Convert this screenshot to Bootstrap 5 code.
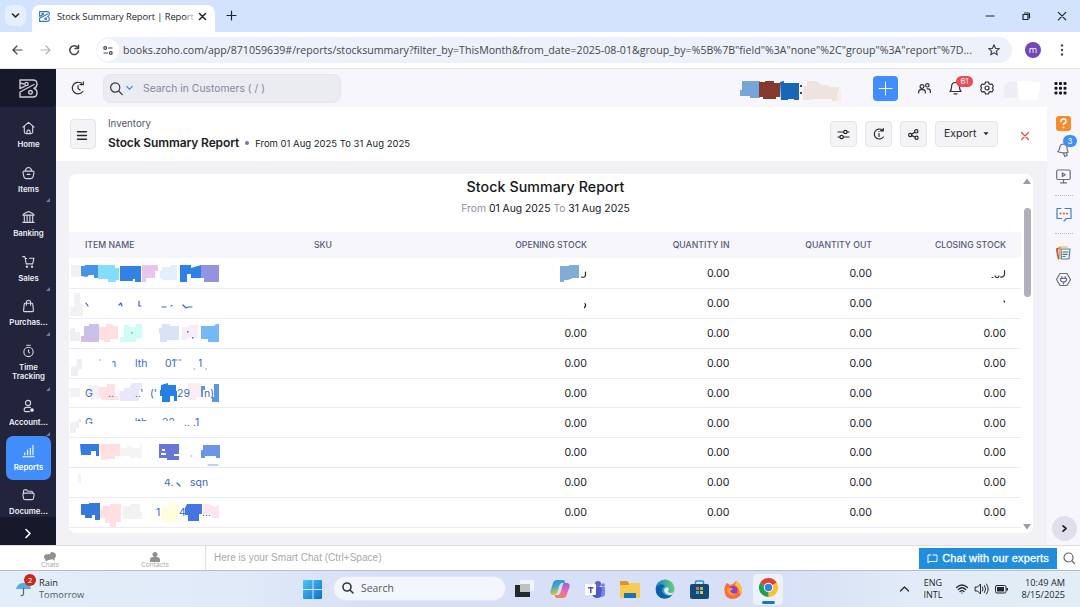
<!DOCTYPE html>
<html lang="en">
<head>
<meta charset="utf-8">
<title>Stock Summary Report | Reports</title>
<link href="https://cdn.jsdelivr.net/npm/bootstrap@5.3.0/dist/css/bootstrap.min.css" rel="stylesheet">
<style>
body{width:1080px;height:607px;overflow:hidden;font-family:Inter,"Liberation Sans",sans-serif;font-size:11px;line-height:1.2;color:#212529;background:#fff}
svg{display:block;flex:none;overflow:visible}
.ln{fill:none;stroke:currentColor;stroke-width:1.2;stroke-linecap:round;stroke-linejoin:round}
.win{font-family:"Open Sans","Noto Sans",sans-serif}
.nw{white-space:nowrap}
.tabstrip{height:32px;background:#d3e3fd;padding:5px 14px 0 5px}
.tabmenu{width:21px;height:21px;border-radius:7px;background:#e6effe}
.tab-active{width:183px;height:27px;margin-left:6px;background:#fff;border-radius:8px 8px 0 0;padding:0 9px 4px 7px}
.tab-name{font-size:9.4px;letter-spacing:-.1px;color:#1f1f1f}
.toolbar{height:37px;padding:0 12px 0 11px;border-bottom:1px solid #e3e5e8;color:#45484c}
.omni{width:916px;height:26px;border-radius:13px;background:#edf1fa;margin-left:16px;padding:0 12px 0 1px}
.site{width:22px;height:22px;border-radius:50%;background:#fff}
.url{font-size:10.6px;letter-spacing:.01px;color:#44474c;margin-left:4px}
.avatar{width:16px;height:16px;border-radius:50%;background:#7248b9;color:#fff;font-size:9px}
.app{height:476px}
.side{width:56px;background:#21243b;color:#dfe1ec;flex:none}
.brand{height:38px;background:#171829;border-radius:0 0 5px 0;color:#c9cad3}
.side-list{height:410px;padding-top:6px;padding-left:1px}
.side-item{height:44.6px;padding-top:8px;font-size:7.8px;font-weight:600;line-height:9.5px;flex:none;position:relative;text-align:center;color:#f0f1f7}
.side-item svg{margin-bottom:5px;color:#d4d6e3;width:13px}
.side-item.tall{height:55px}
.side-item.sub::after{content:"";position:absolute;right:6px;bottom:0;border-left:4px solid transparent;border-bottom:4px solid #777b91}
.side-item.now{background:#408dfb;border-radius:7px;width:45px;margin:0 auto;color:#fff;height:44px}
.side-item.now svg{color:#fff}
.side-more{height:28px;background:#171829;color:#fff}
.topbar{height:38px;background:#f7f7fb;padding:0 11px 0 15px;color:#2d2f3d}
.find{width:238px;height:29px;border-radius:7px;background:#ebebf2;margin-left:18px;padding-left:6px;border:1px solid #e6e6ee;color:#33353f}
.find span{font-size:10.3px;color:#86889a;margin-left:10px;letter-spacing:.03px;padding-top:1px}
.plus{width:25px;height:25px;border-radius:4px;background:#408dfb;color:#fff}
.pill{position:absolute;left:7px;top:-5px;height:11px;width:17px;border-radius:6px;background:#ec4a54;color:#fff;font-size:8px;line-height:11px;text-align:center}
.head{height:54px;padding:0 17px 0 14px}
.sq{height:26px;width:27px;border-radius:4px;background:#f4f4f6;border:1px solid #e4e4e9;color:#26272e}
.menu-sq{height:30px;width:26px}
.head h1{font-size:12px;font-weight:600;margin:0;color:#1c1d24;letter-spacing:-.12px}
.body-bg{background:#f1f1f6;padding:13px 14px 12px 13px;height:384px}
.sheet{height:359px;background:#fff;border-radius:7px;overflow:hidden}
.sheet h2{font-size:14.2px;font-weight:500;line-height:18px;margin:3px 0 0;color:#15161b;letter-spacing:.08px}
.period{font-size:10.35px;margin-top:6px;color:#8e90a3}
.period b{font-weight:400;color:#15161b}
.g{display:grid;grid-template-columns:245px 149px 124px 142.5px 142.5px 134px;align-items:center}
.g>*{text-align:right}
.g>.l{text-align:left}
.th{height:26px;background:#f7f7fb;color:#55567a;font-size:8.7px;font-weight:500;width:952px;margin-bottom:1px}
.tr-row{height:29.9px;border-bottom:1px solid #ebebf3;font-size:10.6px;color:#202127;width:952px}
.tr-row>span{padding-top:2px}
.tr-row>svg{margin-left:1px}
.tr-row text{font-size:10.5px;fill:#3c69b5}
.scroller{width:12px;padding:4px 0}
.thumb{width:7px;height:89px;border-radius:4px;background:#b0b0ba;margin-top:23px}
.rail{width:33px;background:#f7f7fb;color:#6a6b88;padding-top:9px;flex:none;position:relative}
.rail hr{width:18px;margin:0;border-top:1px dotted #b9bac9;opacity:1}
.cnt{position:absolute;left:6px;top:-7px;width:14px;height:12px;border-radius:6px;background:#408dfb;color:#fff;font-size:8px;line-height:12px;text-align:center}
.chatbar{height:25px;border-top:1px solid #dedee2;background:#fff;color:#999}
.mini{font-size:6.6px;color:#aaa;line-height:7px}
.smart{border-left:1px solid #ddd;height:24px;padding-left:8px;font-size:10px;color:#a9a9a9;font-family:"Liberation Sans",sans-serif;letter-spacing:.03px}
.experts{width:138px;height:21px;background:#218ddd;color:#fff;font-family:"Liberation Sans",sans-serif;font-size:11px;letter-spacing:.13px;-webkit-text-stroke:.3px #fff}
.task{height:37px;border-top:1px solid #b6bfd0;background:linear-gradient(90deg,#e3eef9,#e0e9f8 23%,#d7e0f6 35%,#d7e0f6 72%,#e2ebf7 85%,#e2edf6);color:#24262b;font-size:9.3px;line-height:12px}
.search-win{width:173px;height:25px;border-radius:13px;background:#f3f6fd;border:1px solid #e1e7f5;padding-left:8px;font-size:10.4px;color:#555963}
.dot2{position:absolute;left:8px;top:-7px;width:12px;height:12px;border-radius:50%;background:#c42b1c;color:#fff;font-size:8px;text-align:center;line-height:12px}
</style>
<script src="https://cdn.jsdelivr.net/npm/bootstrap@5.3.0/dist/js/bootstrap.bundle.min.js"></script>
</head>
<body>
<!-- browser tabs -->
<div class="tabstrip d-flex win">
  <div class="tabmenu d-flex align-items-center justify-content-center"><svg width="7" height="5" class="ln" style="stroke-width:1.6"><path d="M.5 1 3.5 4 6.5 1"/></svg></div>
  <div class="tab-active d-flex align-items-center">
    <svg width="11" height="11" viewBox="0 0 18 18" class="ln" style="color:#347ab8;stroke-width:1.8"><path d="M1 1h12q4 0 4 4 0 3-3 4 3 1 3 4 0 4-4 4H1v-5L14 5M1 1v8l4-2"/><circle cx="6" cy="5" r="1.3"/><circle cx="11" cy="12.500" r="1.5"/></svg>
    <span class="tab-name nw" style="margin-left:7px">Stock Summary Report | Repo<span style="color:#888">r</span><span style="color:#bbb">t</span></span>
    <svg width="7" height="7" class="ln ms-auto" style="stroke-width:1.5"><path d="M.5.5l6 6M6.500.5l-6 6"/></svg>
  </div>
  <svg width="9" height="9" class="ln ms-3 mt-1" style="transform:translate(-4px,2px)"><path d="M4.500 0v9M0 4.500h9"/></svg>
  <div class="d-flex ms-auto align-items-center gap-4 pe-0" style="height:22px">
    <svg width="8" height="8" class="ln me-1"><path d="M0 4h8"/></svg>
    <svg width="8" height="8" class="ln me-1"><path d="M1 2.500h5v5H1zM2.500 1h4q1 0 1 1v4"/></svg>
    <svg width="8" height="8" class="ln"><path d="M.3.3l7.500 7.500M7.800.3.3 7.800"/></svg>
  </div>
</div>
<div class="toolbar d-flex align-items-center win">
  <svg width="12" height="12" class="ln"><path d="M11 6H2M6 2 2 6l4 4"/></svg>
  <svg width="12" height="12" class="ln" style="color:#b1b3b6;margin-left:17px"><path d="M1 6h9M6 2l4 4-4 4"/></svg>
  <svg width="12" height="12" class="ln" style="margin-left:16px;stroke-width:1.5"><path d="M10 4A4.400 4.400 0 1 0 10.500 7M10.500 1.200V4.500H7"/></svg>
  <div class="omni d-flex align-items-center">
    <div class="site d-flex align-items-center justify-content-center"><svg width="10" height="9" class="ln"><circle cx="2.200" cy="2" r="1.400"/><path d="M5.500 2H9M1 7h3.500"/><circle cx="7.800" cy="7" r="1.400"/></svg></div>
    <span class="url nw">books.zoho.com/app/871059639#/reports/stocksummary?filter_by=ThisMonth&amp;from_date=2025-08-01&amp;group_by=%5B%7B"field"%3A"none"%2C"group"%3A"report"%7D...</span>
    <svg width="12" height="12" class="ln ms-auto"><path d="M6 .8 7.500 4.300 11.300 4.600 8.400 7.100 9.300 10.800 6 8.800 2.700 10.800 3.600 7.100.7 4.600 4.500 4.300z"/></svg>
  </div>
  <div class="avatar d-flex align-items-center justify-content-center" style="margin-left:13px">m</div>
  <svg width="4" height="12" style="margin-left:19px" fill="#45484c"><circle cx="2" cy="1.500" r="1.200"/><circle cx="2" cy="6" r="1.200"/><circle cx="2" cy="10.500" r="1.200"/></svg>
</div>

<div class="app d-flex">
  <!-- module navigation -->
  <nav class="side d-flex flex-column">
    <div class="brand d-flex align-items-center justify-content-center"><svg width="19" height="19" viewBox="0 0 19 19" class="ln" style="stroke-width:1.400"><path d="M1 1h13q4 0 4 4 0 3-3 4.500 3 .5 3 4.500 0 4-4 4H1v-5L15 5.500M1 1v8.500l5-2.300M1 4l4 1"/><circle cx="7.500" cy="5" r="1.600"/><circle cx="11.500" cy="13.300" r="1.800"/></svg></div>
    <div class="side-list d-flex flex-column">
      <div class="side-item d-flex flex-column align-items-center"><svg width="14" height="14" viewBox="0 0 14 14" class="ln"><path d="M1 6 7 1l6 5M2.500 5v6q0 2 2 2h5q2 0 2-2V5M5.300 13v-2q0-1.700 1.700-1.700T8.700 11v2"/></svg>Home</div>
      <div class="side-item sub d-flex flex-column align-items-center"><svg width="14" height="14" viewBox="0 0 14 14" class="ln"><path d="M2.500 5h9q1.500 0 1.400 1.500L12 11q-.4 2-2.500 2h-5Q2.400 13 2 11L1.100 6.500Q1 5 2.500 5zM3.500 4.500C4.500 0 9.500 0 10.500 4.500M5.500 8.500h3"/></svg>Items</div>
      <div class="side-item d-flex flex-column align-items-center"><svg width="14" height="14" viewBox="0 0 14 14" class="ln"><path d="M1 5q0-1 2-2l4-2 4 2q2 1 2 2zM2.500 5v7M5.500 5v7M8.500 5v7M11.500 5v7M1 12.800h12"/></svg>Banking</div>
      <div class="side-item sub d-flex flex-column align-items-center"><svg width="14" height="14" viewBox="0 0 14 14" class="ln"><path d="M.8 1.200h1.500q.8 0 1 .8L4.500 9h7l1.300-6H8M3.600 3.300h1.500"/><circle cx="5.300" cy="12" r=".7"/><circle cx="10.800" cy="12" r=".7"/></svg>Sales</div>
      <div class="side-item sub d-flex flex-column align-items-center"><svg width="14" height="14" viewBox="0 0 14 14" class="ln"><path d="M3.500 4h7q1 0 1.100 1l.7 7q0 1-1 1H2.700q-1 0-1-1l.7-7q.1-1 1.100-1zM4.700 6.200V3.500q0-2.700 2.300-2.700t2.300 2.700v2.700"/></svg>Purchas...</div>
      <div class="side-item sub tall d-flex flex-column align-items-center"><svg width="14" height="14" viewBox="0 0 14 14" class="ln"><circle cx="7" cy="8" r="5"/><path d="M5 .8h4M7 5.800V8l1.200 1"/></svg><span>Time<br>Tracking</span></div>
      <div class="side-item sub d-flex flex-column align-items-center"><svg width="14" height="14" viewBox="0 0 14 14" class="ln"><circle cx="6.500" cy="3.800" r="2.800"/><path d="M9 8.500H5Q2.300 8.500 2.300 11T4.500 13H8"/><circle cx="10.800" cy="11.300" r="1.400" fill="#fff"/></svg>Account...</div>
      <div class="side-item now d-flex flex-column align-items-center"><svg width="14" height="14" viewBox="0 0 14 14" class="ln"><path d="M1 13.200h12M3 11V9M6 11V6M9 11V4M11.800 11V1"/></svg>Reports</div>
      <div class="side-item d-flex flex-column align-items-center"><svg width="14" height="14" viewBox="0 0 14 14" class="ln"><path d="M1.500 5V3q0-1.500 1.500-1.500h2L6.500 3H10q1.500 0 1.500 1.700M2.500 5h9q1.700 0 1.500 1.500l-.6 4q-.2 1.500-2 1.500H3.600q-1.800 0-2-1.500L1 6.500Q.9 5 2.500 5z"/></svg>Docume...</div>
    </div>
    <div class="side-more d-flex align-items-center justify-content-center pt-1"><svg width="6" height="9" class="ln" style="stroke-width:1.6"><path d="M1 .5 5 4.500 1 8.500"/></svg></div>
  </nav>

  <div class="flex-grow-1">
    <div class="topbar d-flex align-items-center">
      <svg width="14" height="14" viewBox="0 0 14 14" class="ln"><path d="M11.800 10.500A5.800 5.800 0 1 1 10.500 2.300M9 3.700h3.300V.8M7 4.500V7.500l2 1.500"/></svg>
      <div class="find d-flex align-items-center">
        <svg width="13" height="13" class="ln"><circle cx="5.200" cy="5.500" r="4.600"/><path d="M8.700 9l3.600 3.600"/></svg>
        <svg width="7" height="4" class="ln" style="color:#408dfb;margin-left:3px"><path d="M.8.5 3.500 3.300 6.200.5"/></svg>
        <span>Search in Customers ( / )</span>
      </div>
      <svg width="110" height="26" style="margin-left:399px;margin-top:3px">
        <path fill="#77a5d8" d="M2 4h18v17H10v-2H0v-6h2z"/><path fill="#84392e" d="M19 5h6V4h9v2h6v14h-4v2H23v-2h-4z"/><path fill="#1866b8" d="M40 5l4-1v2h15v17h-5v-1h-6v1h-7z"/><path fill="#33415c" d="M60 8h2v2h-2zM60 15h2v2h-2z"/><path fill="#ede4e0" d="M63 9h4V4h9l6 4h7v2h10v7h2v7h-9v-2H72l-1 1h-8z"/><path fill="#f3efee" d="M97 14h4v10h-4z"/>
      </svg>
      <div class="d-flex align-items-center" style="margin-left:23px">
        <div class="plus d-flex align-items-center justify-content-center"><svg width="13" height="13" class="ln" style="stroke-width:1"><path d="M6.500 0v13M0 6.500h13"/></svg></div>
        <svg width="13" height="12" viewBox="0 0 13 12" class="ln" style="margin-left:20px"><circle cx="4" cy="4.500" r="1.900"/><circle cx="9.300" cy="3.300" r="1.700"/><path d="M.7 11V10q0-2.300 2.300-2.300h2q2.300 0 2.300 2.300v1M9 6.800h1.200q2.100 0 2.100 2.200v1.500"/></svg>
        <div class="position-relative" style="margin-left:18px"><svg width="13" height="14" viewBox="0 0 13 14" class="ln"><path d="M1 10.500q1.500-1.500 1.500-4.500 0-4.500 4-4.500t4 4.500q0 3 1.500 4.500zM5 12.800h3"/></svg><span class="pill">61</span></div>
        <svg width="14" height="14" viewBox="0 0 14 14" class="ln" style="margin-left:18px"><path d="M5.500 1h3l.5 1.700 1.200.7 1.800-.4 1.400 2.500L12.200 7l1.200 1.500L12 11l-1.800-.4-1.200.7-.5 1.700h-3L5 11.300l-1.200-.7L2 11 .6 8.500 1.800 7 .6 5.500 2 3l1.800.4L5 2.700z"/><circle cx="7" cy="7" r="2"/></svg>
        <svg width="38" height="24" style="margin-left:10px;margin-top:4px"><path fill="#eeeef2" d="M0 7l5-3h8v16H0z"/><path fill="#fff" d="M13 3h8l15 1v5l-3 13H16z"/></svg>
        <svg width="13" height="13" style="margin-left:12px" fill="#15161b"><g id="gd"><rect y="0" x=".5" width="3" height="3" rx="1"/><rect y="0" x="5" width="3" height="3" rx="1"/><rect y="0" x="9.500" width="3" height="3" rx="1"/></g><use href="#gd" y="4.700"/><use href="#gd" y="9.400"/></svg>
      </div>
    </div>
    <div class="d-flex">
      <main class="flex-grow-1" style="width:991px">
        <div class="head d-flex align-items-center">
          <div class="sq menu-sq d-flex align-items-center justify-content-center"><svg width="10" height="9" class="ln" style="stroke-width:1.400;margin-left:-2px;margin-top:2px"><path d="M.5.8h9M.5 4.500h9M.5 8.200h9"/></svg></div>
          <div style="margin-left:12px">
            <div style="font-size:9.7px;color:#55576a;padding-top:1px">Inventory</div>
            <div class="d-flex align-items-center" style="margin-top:6px"><h1 class="nw">Stock Summary Report</h1><span class="rounded-circle" style="width:4px;height:4px;background:#777a91;margin:0 6px"></span><span class="nw" style="font-size:9.500px">From 01 Aug 2025 To 31 Aug 2025</span></div>
          </div>
          <div class="d-flex ms-auto align-items-center" style="gap:8px">
            <div class="sq d-flex align-items-center justify-content-center"><svg width="11" height="9" class="ln"><path d="M0 2h5.500M9.300 2H11M0 7h1.700M5.500 7H11"/><circle cx="7.400" cy="2" r="1.700"/><circle cx="3.600" cy="7" r="1.700"/></svg></div>
            <div class="sq d-flex align-items-center justify-content-center"><svg width="12" height="12" viewBox="0 0 12 12" class="ln"><path d="M10.300 9A5 5 0 1 1 9.300 2M7.500 2.800h2.800V.5M6 5.500v3M6 3.500v.1"/></svg></div>
            <div class="sq d-flex align-items-center justify-content-center"><svg width="11" height="11" class="ln"><circle cx="2.200" cy="6" r="1.600"/><circle cx="8.300" cy="2.300" r="1.700"/><circle cx="8.500" cy="8.700" r="1.600"/><path d="M3.700 5.200 6.800 3.200M3.800 6.600 7 8"/></svg></div>
            <div class="sq d-flex align-items-center justify-content-between" style="width:63px;padding:0 8px;font-size:10.500px">Export<svg width="6" height="4" fill="#202127"><path d="M.5.300h5L3 3.300z"/></svg></div>
            <svg width="8" height="8" class="ln" style="color:#e54643;margin-left:15px;margin-right:1px;margin-top:3px"><path d="M.5.500l7 7M7.500.500l-7 7"/></svg>
          </div>
        </div>
        <div class="body-bg">
          <div class="sheet d-flex">
            <div style="width:952px">
              <div class="text-center" style="height:58px;padding-top:1px;padding-left:1px">
                <h2>Stock Summary Report</h2>
                <div class="period">From <b>01 Aug 2025</b> To <b>31 Aug 2025</b></div>
              </div>
              <div class="th g"><span class="l" style="padding-left:16px">ITEM NAME</span><span class="l">SKU</span><span>OPENING STOCK</span><span>QUANTITY IN</span><span>QUANTITY OUT</span><span>CLOSING STOCK</span></div>
              <div class="tr-row g"><svg width="190" height="29"><path fill="#f0f0f5" d="M1 6h9v12H1z"/><path fill="#4494e8" d="M11 7h4V6h13v13h-4v-3h-5l-2 2-6-1z"/><path fill="#83deff" d="M28 6h17v3h4v12h-3v2h-8v-3H28z"/><path fill="#3381e5" d="M50 7h21v16h-6v-3h-2v2H50z"/><path fill="#e6c7ea" d="M72 6h16v6h-3v7h-9v4h-4z"/><path fill="#e2f0fc" d="M92 8h8V6h7v15H93l-3-2V12h2z"/><path fill="#2e82e6" d="M110 6h11v3l10-3v13h-10v-4h-4v8h-7z"/><path fill="#9493e2" d="M131 6h18v17h-15v-4h-3z"/></svg><span></span><div class="d-flex justify-content-end align-items-center"><svg width="27" height="20"><path fill="#80add5" d="M0 2h9V1h10v13h-6l-5 2H4v2H0z"/><path class="ln" d="M25.500 8v3q-.500 3-4 2"/></svg></div><span>0.00</span><span>0.00</span><div class="d-flex justify-content-end"><svg width="16" height="12"><path class="ln" style="color:#30323a" d="M2 9.500h1M5 8q1 2 3 1.500l1-1.500M14.500 2.500v4q-.500 3-4 2.500"/></svg></div></div>
              <div class="tr-row g"><svg width="190" height="29"><path fill="#f0f0f5" d="M4 4h6v10l3 2v11H0v-9h4z"/><path class="ln" style="color:#3b67b2" d="M16 14l2 3M49 16l2-2 1 3M69 12v5h2M92 18h4M113 16l3 3 2-1h4M101 17l1-.500"/></svg><span></span><div class="d-flex justify-content-end"><svg width="5" height="10"><path class="ln" d="M3 5.500q1.500 2-.500 4"/></svg></div><span>0.00</span><span>0.00</span><div class="d-flex justify-content-end"><svg width="3" height="10"><path class="ln" d="M1 3l.500 1"/></svg></div></div>
              <div class="tr-row g"><svg width="190" height="29"><path fill="#eeeef3" d="M0 10l5-1v4h5v9H0z"/><path fill="#cbc1e8" d="M14 7h5V5h10v18H11v-6h3z"/><path fill="#ffdfe1" d="M29 8h7V5h7v2h5v13h-8v3h-6v-2h-5z"/><path fill="#cffdf6" d="M54 6h5v2h7V5h6v14h-6v4H50v-5h4z"/><path fill="#d8e4f5" d="M92 5h8v2h9v14H97v2h-7v-8h-1v-6h3z"/><path fill="#f6edf9" d="M112 8h6V6h10v13h-11v2h-6z"/><path fill="#75b8f5" d="M131 7h13l2-2h3v18h-11v-3h-7z"/><path fill="#7ba3c4" d="M61 13h1.500v1.500H61z"/><path fill="#5d6bb2" d="M117 12h1.500v1.500H117zM122 18h1.500v1.500H122z"/></svg><span></span><span>0.00</span><span>0.00</span><span>0.00</span><span>0.00</span></div>
              <div class="tr-row g"><svg width="190" height="29"><path fill="#eeeef3" d="M7 10h5v10l-4 1v6H1v-9l5-1z"/><text x="40" y="18" style="clip-path:inset(2px 0 0 2px)">n</text><text x="65" y="18">lth</text><text x="95" y="18">01</text><text x="128" y="18" style="clip-path:inset(1px 0 0 1px)">1</text><path class="ln" style="color:#4c73b5;stroke-width:.9" d="M30 11h.500M105 11h2M109 11h2M124 20h.500M136 20h.500"/></svg><span></span><span>0.00</span><span>0.00</span><span>0.00</span><span>0.00</span></div>
              <div class="tr-row g"><svg width="190" height="29"><path fill="#f2f2f6" d="M0 9h10v9H0zM18 6h11v14H21z"/><path fill="#ffe1e4" d="M29 8h8V5h8v12h4v4H32l-4-6z"/><path fill="#e8e8fa" d="M49 12h5V9h5l3-5h10v7h-3v11H50z"/><text x="15" y="18">G</text><text x="38" y="18">..</text><text x="65" y="18">..'</text><text x="80" y="18">('</text><path fill="#fbedf2" d="M118 4h13v14h-5v3h-8z"/><path fill="#267fe2" d="M91 6l7-2v2h8v6h1v10h-3v-5h-4v6h-8v-6h-2v-6h1z"/><text x="107" y="18">29</text><path fill="#5b96e7" d="M131 7h4v4h-2v7h-2zM144 5h5v18h-7v-5h2z"/><text x="134" y="18">n)</text></svg><span></span><span>0.00</span><span>0.00</span><span>0.00</span><span>0.00</span></div>
              <div class="tr-row g"><svg width="190" height="29"><path fill="#f0f0f4" d="M0 14h6l5-5v5H9v6H6v5H0z"/><text x="15" y="18" style="clip-path:inset(0 0 5px)">G</text><text x="60" y="18" style="clip-path:inset(0 0 8px)">-ltb-</text><text x="92" y="18" style="clip-path:inset(0 0 8px)">22</text><text x="114" y="18">.. .1</text></svg><span></span><span>0.00</span><span>0.00</span><span>0.00</span><span>0.00</span></div>
              <div class="tr-row g"><svg width="190" height="29"><path fill="#327ddf" d="M10 6h19v12h-3v-5h-5v4H11z"/><path fill="#ffdfe2" d="M29 6h21v12h-5v3H36v1h-5v-5z"/><path fill="#f4f4f5" d="M50 10h7V8h5v2h8V6h2v14H60v-2H50z"/><path fill="#6676d5" d="M89 6h20v16H97v-2h-8z"/><path fill="#fff" d="M92 11h3v2h-3zM91 15h5v2h-5zM104 16h5v2h-5z"/><path fill="#6d95e7" d="M133 7h17v13h-4v-2h-11v2h-4v-8h2z"/><path class="ln" style="color:#7d9aca;stroke-width:.9" d="M121 18h1M138 27h10"/></svg><span></span><span>0.00</span><span>0.00</span><span>0.00</span><span>0.00</span></div>
              <div class="tr-row g"><svg width="190" height="29"><path fill="#f4f4f7" d="M8 6h3v9H8z"/><text x="94" y="18" style="clip-path:inset(3px 0 0)">4.</text><path class="ln" style="color:#3c69b5" d="M107 15l3 3"/><text x="120" y="18">sqn</text></svg><span></span><span>0.00</span><span>0.00</span><span>0.00</span><span>0.00</span></div>
              <div class="tr-row g"><svg width="190" height="29"><path fill="#3578d9" d="M11 6h8V5h11v17h-5v-5h-3v3h-7v-3h-4z"/><path fill="#ffdfe2" d="M32 8h8V6h11v18h-5v5h-6v-4h-5v-5h-5V12h2z"/><path fill="#f2f2f3" d="M53 8h7V6h10v8h2v7H53z"/><text x="86" y="18">1</text><path fill="#fffedc" d="M93 9h6V5h10v17l-4 2H94l-3-4v-7z"/><path fill="#4575e2" d="M117 6h15v10h-3v7h-11v-6h-3v-7z"/><text x="109" y="18">4</text><path fill="#fce5f0" d="M133 6h6l6 3 4-3v14h-7v-4h-9z"/><text x="132" y="18">...</text></svg><span></span><span>0.00</span><span>0.00</span><span>0.00</span><span>0.00</span></div>
            </div>
            <div class="scroller d-flex flex-column align-items-center">
              <svg width="8" height="7" fill="#9b9ba3"><path d="M0 6 4 .500 8 6z"/></svg>
              <div class="thumb"></div>
              <svg width="8" height="7" class="mt-auto" fill="#9b9ba3" style="margin-bottom:-1px"><path d="M0 1h8L4 6.500z"/></svg>
            </div>
          </div>
        </div>
      </main>
      <!-- help and shortcuts -->
      <aside class="rail d-flex flex-column align-items-center">
        <svg width="15" height="15"><rect width="15" height="15" rx="3" fill="#f68b2c"/><path class="ln" style="color:#fff;stroke-width:1.700" d="M5 5.500q0-2.500 2.500-2.500T10 5.300Q10 6.800 7.500 8M7.500 11.300v.1"/></svg>
        <div class="position-relative" style="margin-top:11px"><svg width="13" height="15" viewBox="0 0 13 15" class="ln"><path d="M.8 9.800Q2.500 8.500 2.800 5.500 3.300 2 6.500 2q3.200.2 3.500 3.500 0 3 1.200 4.700Q6 11.800.8 9.800zM6.500 11.200l1.300 3.300 2.400-1.200-.7-2.300"/></svg><span class="cnt">3</span></div>
        <svg width="15" height="15" viewBox="0 0 15 15" class="ln" style="margin-top:12px;flex:none"><rect x=".7" y="1" width="13.500" height="9.500" rx="1.500"/><path d="M7.500 10.500v3M4.500 13.800h6M6.300 4v3.500L9.300 5.800z"/></svg>
        <hr style="margin-top:11px">
        <svg width="16" height="15" viewBox="0 0 16 15" class="ln" style="margin-top:11px;color:#3a82bd"><path d="M5.500 11.500H1v-10h4M9 1.500h6v10h-4.500L8 14"/><path d="M4.500 6.500h.1M7.800 6.500h.1M11 6.500h.1" style="stroke:#e25858;stroke-width:2"/></svg>
        <hr style="margin-top:11px">
        <svg width="15" height="14" viewBox="0 0 15 14" class="ln" style="margin-top:12px"><path d="M4 2 .800 3.200 2.500 12.500" style="stroke:#d94d45;stroke-width:1.800"/><path d="M11 1H3l1 11.500h3" style="stroke:#e9ae35"/><path d="M5 3h9l-1 10H5.500z" style="stroke:#4f86c4;fill:#fbf1d2"/><path d="M7 6h5M7 8.300h4M7 10.500h2" style="stroke:#3f76bb"/></svg>
        <svg width="15" height="15" viewBox="0 0 15 15" class="ln" style="margin-top:12px"><path d="M4 1.500h7l3.500 6-3.500 6H4l-3.500-6zM5.800 4.500V6M9.200 4.500V6M4.500 6.300h6v1.200q0 2.500-3 2.500t-3-2.500zM7.500 10v2"/></svg>
        <div class="rounded-circle d-flex align-items-center justify-content-center mt-auto" style="width:25px;height:25px;background:#e0dfeb;margin-bottom:4px;margin-left:1px"><svg width="5" height="7" class="ln" style="color:#222;stroke-width:1.700"><path d="M1 .800 4 3.500 1 6.200"/></svg></div>
      </aside>
    </div>
  </div>
</div>

<div class="chatbar d-flex align-items-center">
  <div class="d-flex flex-column align-items-center pt-1" style="width:100px"><svg width="12" height="10" fill="#909090"><path d="M7 0q5 0 5 3.500 0 2-1.500 3V9L8.500 7.200Q6 7.200 4.500 6z"/><path d="M4.500 2q4 0 4 3t-4 3L1.500 9.500V7.500Q0 6.700 0 5q0-3 4.500-3z"/></svg><span class="mini">Chats</span></div>
  <div class="d-flex flex-column align-items-center pt-1" style="width:105px;padding-left:5px"><svg width="10" height="10" fill="#909090"><circle cx="5" cy="2.500" r="2.500"/><path d="M0 10V8q0-3 3-3h4q3 0 3 3v2z"/></svg><span class="mini">Contacts</span></div>
  <div class="smart d-flex align-items-center flex-grow-1">Here is your Smart Chat (Ctrl+Space)</div>
  <div class="experts d-flex align-items-center justify-content-center align-self-end" style="margin-bottom:1px"><svg width="11" height="10" class="ln me-1" style="stroke-width:1"><path d="M4 1H1v8l2-1.500h7V4M6 1h4v2"/></svg>Chat with our experts</div>
  <svg width="12" height="12" class="ln" style="margin:0 5px 0 6px;color:#666"><circle cx="5.500" cy="5.500" r="4.500"/><path d="M9 9l2.700 2.700"/></svg>
</div>

<div class="task d-flex align-items-center win">
  <div class="d-flex align-items-center" style="width:302px;padding-left:16px">
    <div class="position-relative"><svg width="15" height="16" viewBox="0 0 15 16"><path d="M0 8Q2 1 8 2q6 0 7 6z" fill="#55acdf"/><path class="ln" style="color:#5d6470" d="M7.500 7v6q-.5 2-2.500 1.500"/></svg><span class="dot2">2</span></div>
    <div style="margin-left:8px">Rain<br><span style="color:#555b63">Tomorrow</span></div>
  </div>
  <svg width="20" height="19" viewBox="0 0 20 19" style="margin-left:1px"><defs><linearGradient id="w" x2="1" y2="1"><stop stop-color="#4fc3f5"/><stop offset="1" stop-color="#0872ce"/></linearGradient></defs><path fill="url(#w)" d="M1 0h8.500v9H0V1q0-1 1-1zM10.500 0H18q1 0 1 1v8h-8.500zM0 10h9.500v9H1q-1 0-1-1zM10.500 10H19v8q0 1-1 1h-7.500z"/></svg>
  <div class="search-win d-flex align-items-center" style="margin-left:10px;margin-bottom:2px"><svg width="12" height="12" class="ln" style="stroke-width:1.600;color:#34373d"><circle cx="5" cy="5" r="4"/><path d="M8 8l3 3"/></svg><span style="margin-left:7px">Search</span></div>
  <div class="d-flex align-items-center" style="margin-left:9px;gap:15px;height:36px">
    <svg width="20" height="20"><path fill="#f3f4f6" d="M5 1h14v11H5z"/><path fill="#25272a" d="M0 6h15v12H0z"/><path fill="#bfc1c2" d="M5 5h10v8H5z"/></svg>
    <svg width="20" height="20" viewBox="0 0 20 20"><defs><linearGradient id="c" x2=".3" y2="1"><stop stop-color="#2a85e8"/><stop offset=".45" stop-color="#3aa9c9"/><stop offset="1" stop-color="#e8c33d"/></linearGradient><linearGradient id="d" x2="0" y2="1"><stop stop-color="#8d62ea"/><stop offset=".5" stop-color="#e36ab2"/><stop offset="1" stop-color="#f4855a"/></linearGradient></defs><path fill="url(#c)" d="M7 1h6q2 0 2 3H12q-2 0-3 4l-1.500 5Q6.500 16 4 16H3q-3 0-2.500-4L3 4q1-3 4-3z"/><path fill="url(#d)" d="M14 4h3q3 0 2.500 4L17 15q-1 4-4 4H7q-2 0-2-3h3q2 0 3-4l1.500-5q.5-3 1.500-3z"/></svg>
    <svg width="20" height="19" viewBox="0 0 20 19"><circle cx="13" cy="4" r="3" fill="#5961c3"/><circle cx="18" cy="5" r="1.800" fill="#7378ce"/><path fill="#5059c9" d="M7 7h9q1 0 1 1v5q0 5-5 5-4 0-5-4z"/><path fill="#7b83eb" d="M17 7h3v7q0 3-4 3z"/><rect y="4" width="11" height="11" rx="1" fill="#fff"/><path fill="#4a50b0" d="M3 7h5.500v1.500H6.500V13H5V8.500H3z"/></svg>
    <svg width="20" height="19"><path fill="#dc951e" d="M0 2q0-1 1-1h6l2 2v3H0z"/><path fill="#f8cb52" d="M0 5h9l1-2h9q1 0 1 1v14H0z"/><path fill="#1e72b5" d="M4 13h12v5H4z"/></svg>
    <svg width="20" height="20" viewBox="0 0 20 20"><defs><linearGradient id="e" x2="1" y2="0"><stop stop-color="#1684cb"/><stop offset="1" stop-color="#65cf75"/></linearGradient></defs><circle cx="10" cy="10" r="9.500" fill="url(#e)"/><path fill="#0b5faf" d="M1 8q5-5 9-1-5 3-2 7 3 4 9 2-3 4-8 3.500Q0 19 1 8z"/><path fill="#dce6f6" d="M10 9q3-2 4 1-1 2-1 3 3 2 6 0l-2 3q-8 0-8-5z"/></svg>
    <svg width="19" height="19"><path fill="none" stroke="#3293c9" stroke-width="1.500" d="M5.500 5V2q0-1 1-1h6q1 0 1 1v3"/><rect y="4" width="19" height="15" rx="2" fill="#154a78"/><path fill="#ef653f" d="M6 7h3v3H6z"/><path fill="#8ac65a" d="M10 7h3v3h-3z"/><path fill="#42aee8" d="M6 11h3v3H6z"/><path fill="#f7bd3d" d="M10 11h3v3h-3z"/></svg>
    <svg width="19" height="19" viewBox="0 0 19 19"><path fill="#ff6b38" d="M3 3l3 2q4-1 6-4 5 3 6 9 0 8-9 9Q1 19 .500 11 0 6 3 3z"/><path fill="#ffc03c" d="M12 1q6 4 6 9 0 3-2 5 0-7-5-10z"/><circle cx="9" cy="10.500" r="4.500" fill="#8746c9"/><path fill="#ff9d35" d="M3 8q4-1 6 1l-3 2q2 4 7 2-4 5-8 1-2-2-2-6z"/></svg>
    <div class="d-flex flex-column align-items-center rounded-1" style="width:30px;height:31px;background:#edf2fa;padding-top:4px;margin-left:-5px"><svg width="19" height="19" viewBox="0 0 20 20"><path fill="#e34133" d="M10 10 1.300 5A10 10 0 0 1 18.700 5z"/><path fill="#f8c42d" d="M10 10 18.700 5A10 10 0 0 1 10 20z"/><path fill="#279d50" d="M10 10v10A10 10 0 0 1 1.300 5z"/><circle cx="10" cy="10" r="5" fill="#fff"/><circle cx="10" cy="10" r="3.900" fill="#367ee8"/></svg><span style="width:13px;height:3px;border-radius:2px;background:#1778bd;margin-top:4px"></span></div>
  </div>
  <div class="d-flex align-items-center ms-auto" style="padding-right:15px">
    <svg width="9" height="6" class="ln"><path d="M.500 5 4.500 1l4 4"/></svg>
    <div class="text-center" style="margin-left:15px;font-size:9px">ENG<br>INTL</div>
    <svg width="12" height="10" class="ln" style="margin-left:14px"><path d="M.500 3.500q5.500-5 11 0M2.300 5.500q3.700-3.500 7.400 0M4 7.500q2-1.700 4 0M6 9v.1"/></svg>
    <svg width="14" height="12" class="ln" style="margin-left:7px;stroke-width:1"><path d="M.500 4h2L5.500 1v10l-3-3h-2zM7.500 4q1.200 2 0 4M9.500 2.500q2.500 3.500 0 7M11.500 1q3.500 5 0 10"/></svg>
    <svg width="13" height="9" style="margin-left:6px"><rect x=".500" y=".500" width="10.500" height="7.500" rx="1.500" fill="none" stroke="#24262b"/><path fill="#24262b" d="M2 2h7v4.500H2zM11.500 3H13v2.500h-1.500z"/></svg>
    <div class="text-end nw" style="margin-left:13px;font-size:9.200px">10:49 AM<br>8/15/2025</div>
  </div>
</div>
</body>
</html>
